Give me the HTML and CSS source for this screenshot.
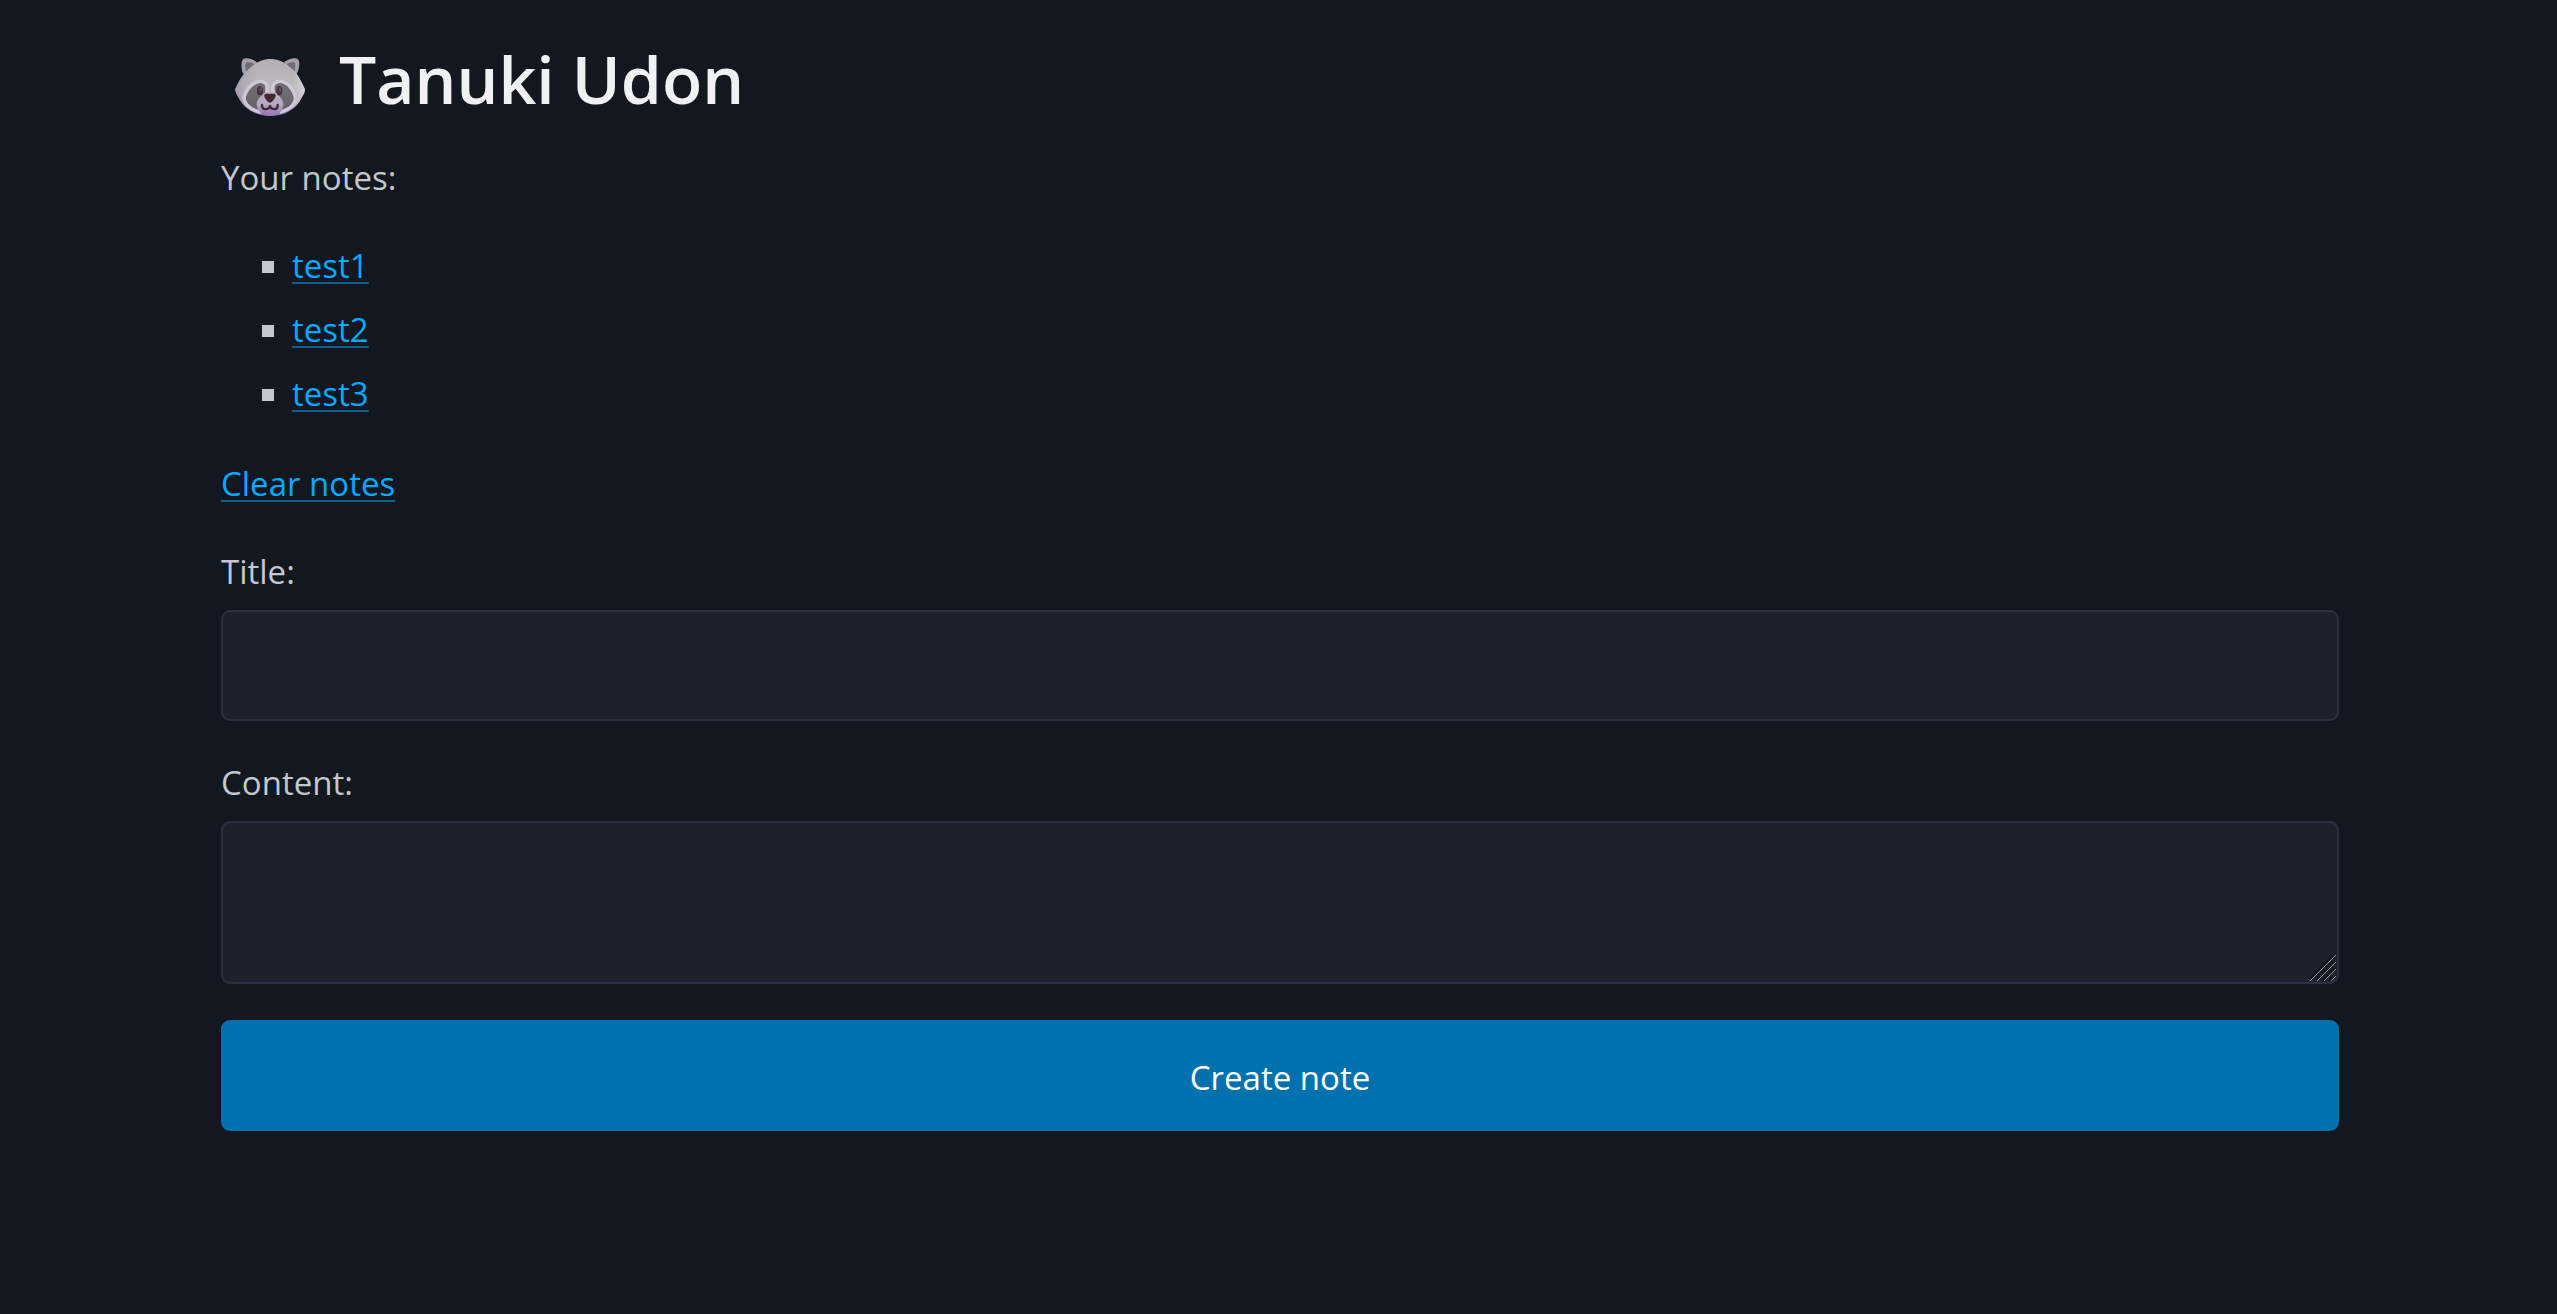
FILE: index.html
```html
<!DOCTYPE html>
<html lang="en">
<head>
<meta charset="utf-8">
<meta name="viewport" content="width=device-width, initial-scale=1">
<title>Tanuki Udon</title>
<link rel="stylesheet" href="styles.css">
</head>
<body>
<main class="container">
  <h1 class="brand">
    <svg class="brand-icon" viewBox="74 54 210 174" aria-hidden="true">
      <defs>
        <linearGradient id="fur" x1="0" y1="0" x2="0" y2="1">
          <stop offset="0" stop-color="#b2b0b3"/>
          <stop offset=".55" stop-color="#bdbabf"/>
          <stop offset=".8" stop-color="#b5a9c0"/>
          <stop offset="1" stop-color="#8d70ac"/>
        </linearGradient>
        <linearGradient id="side" x1="0" y1="0" x2="1" y2="0">
          <stop offset="0" stop-color="#9b8da5" stop-opacity=".75"/>
          <stop offset=".3" stop-color="#aaa5ae" stop-opacity="0"/>
          <stop offset=".8" stop-color="#ccc" stop-opacity="0"/>
          <stop offset="1" stop-color="#d3ced5"/>
        </linearGradient>
        <linearGradient id="mask" x1="0" y1="0" x2="0" y2="1">
          <stop offset="0" stop-color="#727076"/>
          <stop offset=".7" stop-color="#69666c"/>
          <stop offset="1" stop-color="#70597f"/>
        </linearGradient>
        <linearGradient id="muzzle" x1="0" y1="0" x2="0" y2="1">
          <stop offset="0" stop-color="#b9b2be"/>
          <stop offset=".5" stop-color="#b5a9bf"/>
          <stop offset="1" stop-color="#9274b5"/>
        </linearGradient>
      </defs>
      <path fill="#a59fa9" d="M96 96C91 74 93 56 105 55C118 54 132 60 140 67L104 108ZM262 96C270 74 269 56 256 55C243 54 230 60 221 67L255 108Z"/>
      <path fill="#706c73" d="M106 91C104 75 105 68 111 67C119 66 126 69 132 73L108 98ZM253 91C256 75 256 68 250 67C242 66 235 69 229 73L251 98Z"/>
      <path fill="url(#fur)" d="M181 57C147 57 132 73 114 88C97 103 85 124 76 144C72 153 80 164 86 175C102 207 137 228 181 228C224 228 258 207 273 175C279 164 287 153 282 144C273 124 263 103 246 88C228 73 213 57 181 57Z"/>
      <path fill="url(#side)" d="M181 57C147 57 132 73 114 88C97 103 85 124 76 144C72 153 80 164 86 175C102 207 137 228 181 228C224 228 258 207 273 175C279 164 287 153 282 144C273 124 263 103 246 88C228 73 213 57 181 57Z"/>
      <path fill="url(#mask)" stroke="#d0c8d9" stroke-width="10" stroke-linejoin="round" d="M101 171C108 151 122 133 137 127C152 121 168 125 170 139L169 177L148 216C127 210 102 197 101 171ZM255 171C249 151 237 133 222 127C207 121 190 125 188 139L189 177L211 216C231 210 256 197 255 171Z"/>
      <path fill="url(#muzzle)" d="M165 157L195 157C203 164 218 177 219 193C219 215 202 228 180 228C157 228 140 215 139 193C139 177 156 165 165 157Z"/>
      <ellipse cx="149" cy="152" rx="9" ry="14" fill="#452f40"/>
      <ellipse cx="207" cy="152" rx="9" ry="14" fill="#452f40"/>
      <ellipse cx="151" cy="148" rx="4" ry="8" fill="#60505e"/>
      <ellipse cx="209" cy="148" rx="4" ry="8" fill="#60505e"/>
      <path fill="#44262e" d="M169 161H190C196 161 198 167 194 173C190 180 184 188 179 188C174 188 168 181 164 174C160 167 162 161 169 161Z"/>
      <path fill="none" stroke="#432832" stroke-width="7" stroke-linecap="round" stroke-linejoin="round" d="M155 195C154 211 175 211 179 198C183 211 203 211 202 195"/>
    </svg>
    <span>Tanuki Udon</span>
  </h1>
  <p>Your notes:</p>
  <ul class="notes">
    <li><a href="#test1">test1</a></li>
    <li><a href="#test2">test2</a></li>
    <li><a href="#test3">test3</a></li>
  </ul>
  <p><a href="#clear">Clear notes</a></p>
  <form class="note-form">
    <label for="title">Title:</label>
    <input id="title" name="title" type="text">
    <label for="content">Content:</label>
    <div class="text-area">
      <textarea id="content" name="content"></textarea>
      <svg class="grip" viewBox="0 0 26 26" aria-hidden="true">
        <path class="grip-shade" d="M-1 25L25-1M6 25L25 6M13 25L25 13M20 25L25 20"/>
        <path class="grip-line" d="M0 26L26 0M7 26L26 7M14 26L26 14M21 26L26 21"/>
      </svg>
    </div>
    <button type="submit">Create note</button>
  </form>
</main>
</body>
</html>
```
FILE: styles.css
```css
* {
  box-sizing: border-box;
}

body {
  margin: 0;
  background: #13171f;
  color: #c2c7d0;
  font: 33px/52px "Open Sans", "Noto Sans", sans-serif;
}

.container {
  padding: 41px 218px 36px 221px;
}

h1,
p,
ul {
  margin: 0 0 36px;
}

.brand {
  display: flex;
  align-items: flex-end;
  gap: 34px;
  padding-left: 14px;
  color: #f0f1f3;
  font-size: 66px;
  font-weight: 600;
  line-height: 75px;
}

.brand-icon {
  width: 70px;
  height: 58px;
}

.notes {
  display: flex;
  flex-direction: column;
  gap: 12px;
  padding: 0 0 2px 71px;
  list-style: square;
}

a {
  color: #01aaff;
  text-decoration: underline 2px rgba(1, 170, 255, 0.5);
  text-underline-offset: 4px;
}

.note-form {
  display: flex;
  flex-direction: column;
}

label {
  margin-bottom: 12px;
}

input,
textarea,
button {
  display: block;
  width: 100%;
  padding: 28px 35px 24px;
  border: 2px solid #2a3140;
  border-radius: 9px;
  background: #1c212c;
  color: #e0e3e7;
  font: inherit;
}

input,
button {
  height: 111px;
}

input,
.text-area {
  margin-bottom: 36px;
}

.text-area {
  position: relative;
}

textarea {
  height: 163px;
  resize: vertical;
}

textarea::-webkit-resizer {
  background: transparent;
}

.grip {
  position: absolute;
  right: 3px;
  bottom: 3px;
  width: 26px;
  height: 26px;
  fill: none;
  pointer-events: none;
}

.grip-shade {
  stroke: #13171f;
  stroke-width: 3px;
}

.grip-line {
  stroke: #999;
  stroke-width: 1px;
}

button {
  border-color: #0172ad;
  background: #0172ad;
  color: #fff;
  cursor: pointer;
}
```
